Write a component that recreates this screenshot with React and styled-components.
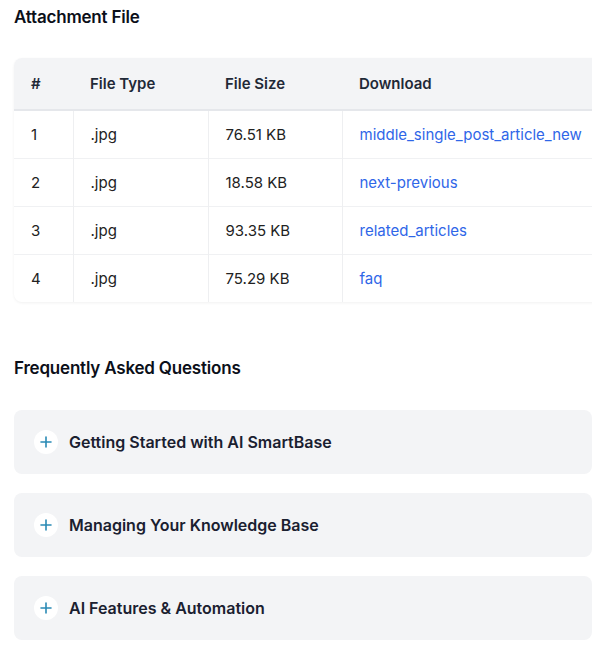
import React from "react";
import styled, { createGlobalStyle } from "styled-components";

const Global = createGlobalStyle`
  html, body { margin: 0; padding: 0; background: #ffffff; }
  body { font-family: Inter, "Noto Sans", sans-serif; color: #111827; overflow: hidden; }
`;

const Page = styled.div`
  width: 578px;
  padding: 4px 0 0 14px;
`;

const Section = styled.section`
  display: flex;
  flex-direction: column;
  margin-bottom: ${(p) => p.$mb || 0}px;
`;

const Title = styled.h2`
  margin: 0;
  font-size: 17px;
  font-weight: 600;
  letter-spacing: -0.2px;
  line-height: 26px;
  color: #0b0f19;
`;

const TableWrap = styled.div`
  margin-top: ${(p) => p.$mt}px;
  width: 620px;
  border-radius: 8px;
  overflow: hidden;
  box-shadow: 0 1px 3px rgba(0, 0, 0, 0.06);
`;

const Table = styled.table`
  width: 100%;
  table-layout: fixed;
  border-collapse: collapse;
  font-size: 15px;
`;

const HeadRow = styled.tr`
  background: #f3f4f6;
  border-bottom: 2px solid #e5e7eb;
`;

const Th = styled.th`
  text-align: left;
  font-size: 15px;
  font-weight: 600;
  color: #1f2937;
  height: 52px;
  padding: 0 17px;
  width: ${(p) => p.$w || "auto"};
  box-sizing: border-box;
`;

const Row = styled.tr`
  border-bottom: 1px solid #f0f1f3;
  &:last-child { border-bottom: none; }
`;

const Td = styled.td`
  height: 47px;
  padding: 0 17px;
  color: #222;
  white-space: nowrap;
  border-left: ${(p) => (p.$first ? "none" : "1px solid #eeeff1")};
`;

const Link = styled.a`
  color: #2f66e8;
  text-decoration: none;
`;

const FaqList = styled.div`
  margin-top: 29px;
  display: flex;
  flex-direction: column;
  gap: 19px;
`;

const FaqItem = styled.div`
  height: 64px;
  flex-shrink: 0;
  background: #f3f4f6;
  border-radius: 8px;
  display: flex;
  align-items: center;
  padding-left: 20px;
  gap: 11px;
`;

const PlusCircle = styled.span`
  width: 24px;
  height: 24px;
  border-radius: 50%;
  background: #ffffff;
  display: flex;
  align-items: center;
  justify-content: center;
  flex-shrink: 0;
`;

const FaqText = styled.span`
  font-size: 16px;
  font-weight: 600;
  color: #1a2030;
`;

const rows = [
  ["1", ".jpg", "76.51 KB", "middle_single_post_article_new"],
  ["2", ".jpg", "18.58 KB", "next-previous"],
  ["3", ".jpg", "93.35 KB", "related_articles"],
  ["4", ".jpg", "75.29 KB", "faq"],
];

const faqs = [
  "Getting Started with AI SmartBase",
  "Managing Your Knowledge Base",
  "AI Features & Automation",
];

const Plus = () => (
  <svg width="12" height="12" viewBox="0 0 12 12">
    <path d="M6 1v10M1 6h10" stroke="#2a8ab5" strokeWidth="1.6" strokeLinecap="round" />
  </svg>
);

export default function App() {
  return (
    <Page>
      <Global />
      <Section $mb={53}>
        <Title>Attachment File</Title>
        <TableWrap $mt={28}>
          <Table>
            <thead>
              <HeadRow>
                <Th $w="59px">#</Th>
                <Th $w="135px">File Type</Th>
                <Th $w="134px">File Size</Th>
                <Th>Download</Th>
              </HeadRow>
            </thead>
            <tbody>
              {rows.map((r) => (
                <Row key={r[0]}>
                  <Td $first>{r[0]}</Td>
                  <Td>{r[1]}</Td>
                  <Td>{r[2]}</Td>
                  <Td>
                    <Link href="#">{r[3]}</Link>
                  </Td>
                </Row>
              ))}
            </tbody>
          </Table>
        </TableWrap>
      </Section>
      <Section>
        <Title>Frequently Asked Questions</Title>
        <FaqList>
          {faqs.map((f) => (
            <FaqItem key={f}>
              <PlusCircle>
                <Plus />
              </PlusCircle>
              <FaqText>{f}</FaqText>
            </FaqItem>
          ))}
        </FaqList>
      </Section>
    </Page>
  );
}
